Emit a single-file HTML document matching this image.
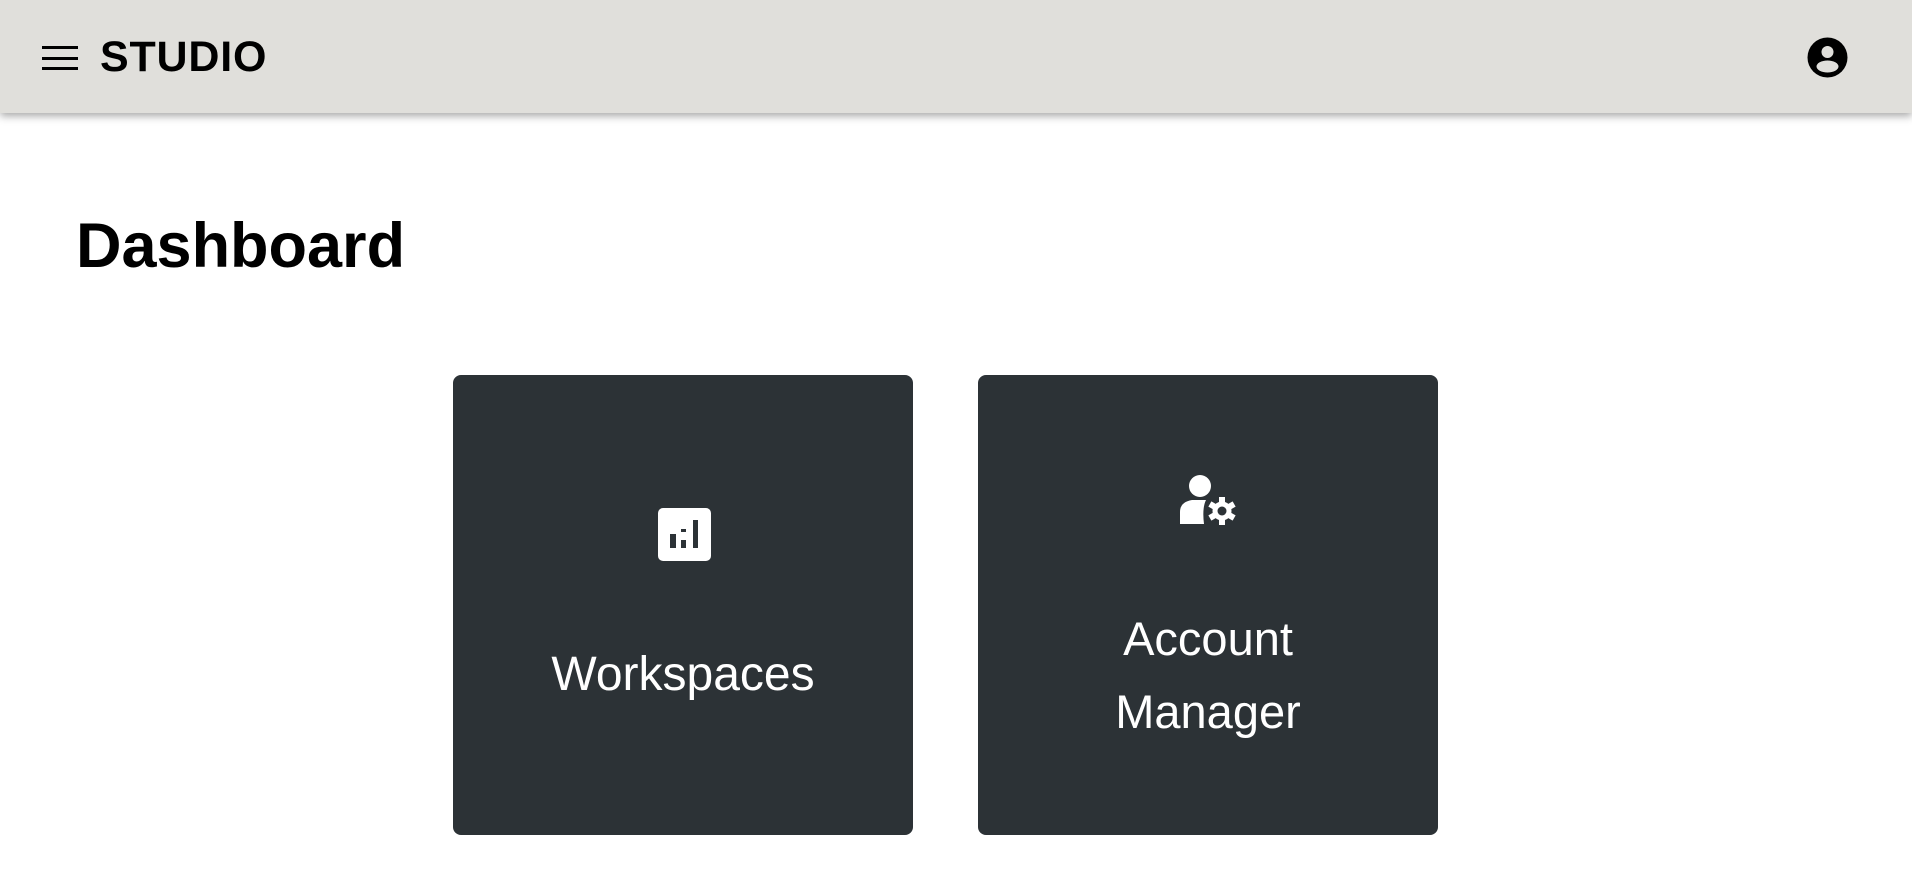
<!DOCTYPE html>
<html><head><meta charset="utf-8"><style>
html,body{margin:0;padding:0;width:1912px;height:892px;background:#fff;overflow:hidden;font-family:"Liberation Sans",sans-serif;}
.hdr{position:absolute;left:0;top:0;width:1912px;height:113px;background:#e0dfdb;box-shadow:0 3px 8px rgba(0,0,0,0.35);}
.ham{position:absolute;left:42px;width:36px;height:3px;background:#000;}
.studio{position:absolute;left:100px;top:32px;font-weight:bold;font-size:43px;letter-spacing:0.8px;line-height:50px;color:#000;}
h1{position:absolute;left:76px;top:206px;margin:0;font-size:63px;line-height:80px;font-weight:bold;color:#000;}
.card{position:absolute;top:375px;width:460px;height:460px;background:#2c3236;border-radius:8px;color:#fff;text-align:center;}
.lbl{position:absolute;left:0;width:100%;font-size:47px;line-height:73px;}
</style></head><body>
<div class="hdr">
<div class="ham" style="top:46px"></div><div class="ham" style="top:57px"></div><div class="ham" style="top:67px"></div>
<div class="studio">STUDIO</div>
<svg style="position:absolute;left:1807px;top:37px" width="41" height="41" viewBox="0 0 41 41">
<circle cx="20.5" cy="20.5" r="20" fill="#000"/>
<circle cx="20.5" cy="15" r="6" fill="#e0dfdb"/>
<ellipse cx="20.5" cy="29.5" rx="11" ry="6" fill="#e0dfdb"/>
</svg>
</div>
<h1>Dashboard</h1>
<div class="card" style="left:453px">
<svg style="position:absolute;left:205px;top:133px" width="53" height="53" viewBox="0 0 53 53">
<rect x="0" y="0" width="53" height="53" rx="5" fill="#fff"/>
<rect x="12" y="26" width="6" height="14" fill="#2c3236"/>
<rect x="23" y="21" width="5" height="3" fill="#2c3236"/>
<rect x="23" y="32" width="5" height="8" fill="#2c3236"/>
<rect x="35" y="12" width="5" height="28" fill="#2c3236"/>
</svg>
<div class="lbl" style="top:263px;font-size:48px">Workspaces</div>
</div>
<div class="card" style="left:978px">
<svg style="position:absolute;left:200px;top:99px" width="60" height="52" viewBox="0 0 60 52">
<circle cx="22" cy="12" r="11" fill="#fff"/>
<path d="M2 50 V38 Q2 28 14 26 H28 Q24 34 26 50 Z" fill="#fff"/>
<g transform="translate(44,37)">
<circle r="9.5" fill="#fff"/>
<g fill="#fff">
<rect x="-3" y="-14" width="6" height="28"/>
<rect x="-3" y="-14" width="6" height="28" transform="rotate(60)"/>
<rect x="-3" y="-14" width="6" height="28" transform="rotate(120)"/>
</g>
<circle r="4.5" fill="#2c3236"/>
</g>
</svg>
<div class="lbl" style="top:227px">Account<br>Manager</div>
</div>
</body></html>
